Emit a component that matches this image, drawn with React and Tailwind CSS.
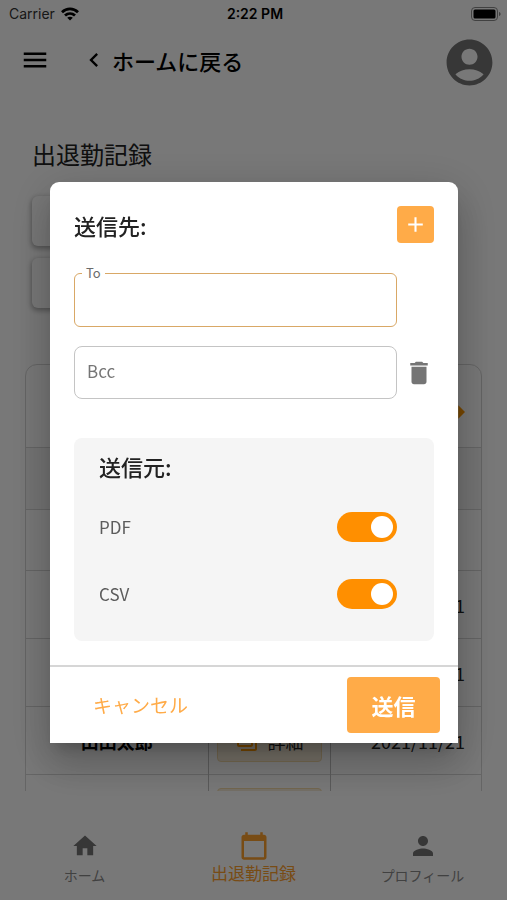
import { useState } from 'react';
import {
  MdAccountCircle,
  MdAdd,
  MdArrowRight,
  MdCalendarToday,
  MdChevronLeft,
  MdDelete,
  MdHome,
  MdMenu,
  MdOutlineLibraryBooks,
  MdPerson,
} from 'react-icons/md';

const ROWS = [1, 2, 3, 4];

const TABS = [
  { label: 'ホーム', icon: MdHome, size: 28 },
  { label: '出退勤記録', icon: MdCalendarToday, size: 30, active: true },
  { label: 'プロフィール', icon: MdPerson, size: 30 },
];

const WifiIcon = () => (
  <svg width="18" height="14" viewBox="0 0 18 14" fill="none" stroke="currentColor" strokeWidth="2.8">
    <path d="M1 5.2C5.6 0.8 12.4 0.8 17 5.2" />
    <path d="M4 8.6C6.9 5.9 11.1 5.9 14 8.6" />
    <path d="M9 13.6L6.2 10.8C7.8 9.4 10.2 9.4 11.8 10.8Z" fill="currentColor" stroke="none" />
  </svg>
);

const BatteryIcon = () => (
  <svg width="30" height="14" viewBox="0 0 30 14" fill="none">
    <rect x="0.5" y="0.5" width="26" height="13" rx="3.5" stroke="#8a8a8a" />
    <rect x="2.5" y="2.5" width="22" height="9" rx="1.5" fill="#000" />
    <path d="M28 5V9C29 8.7 29.6 8 29.6 7C29.6 6 29 5.3 28 5Z" fill="#8a8a8a" />
  </svg>
);

function StatusBar() {
  return (
    <div className="grid h-7 shrink-0 grid-cols-3 items-center pl-[9px] pr-1.5 font-['Inter',sans-serif] text-sm text-black">
      <div className="flex items-center gap-1.5">
        <span className="text-[#333]">Carrier</span>
        <WifiIcon />
      </div>
      <span className="text-center font-semibold">2:22 PM</span>
      <div className="flex justify-end">
        <BatteryIcon />
      </div>
    </div>
  );
}

function Header() {
  return (
    <header className="flex h-[68px] shrink-0 items-center justify-between pl-5 pr-2.5 text-black">
      <div className="flex items-center gap-[30px] pb-1">
        <button type="button" aria-label="menu">
          <MdMenu size={30} />
        </button>
        <a href="#home" className="flex items-center gap-1 text-[22px] font-medium leading-8">
          <MdChevronLeft size={28} />
          ホームに戻る
        </a>
      </div>
      <button type="button" aria-label="account" className="text-[#757575]">
        <MdAccountCircle size={55} />
      </button>
    </header>
  );
}

function RecordsTable() {
  return (
    <div className="mt-14 rounded-t-xl border border-[#d6d6d6]">
      <div className="flex h-[82px] items-center justify-end pr-1 pt-3">
        <button type="button" aria-label="next" className="text-[#ff9800]">
          <MdArrowRight size={32} />
        </button>
      </div>
      <table className="w-full table-fixed border-collapse text-lg leading-6">
        <thead>
          <tr className="h-[62px] border-t border-[#d6d6d6] bg-[#f5f5f5]">
            <td className="w-2/5" />
            <td className="w-[27%]" />
            <td />
          </tr>
          <tr className="h-[61px] border-t border-[#d6d6d6]">
            <td />
            <td />
            <td />
          </tr>
        </thead>
        <tbody>
          {ROWS.map((id) => (
            <tr key={id} className="h-[68px] border-t border-[#d6d6d6]">
              <td className="text-center font-bold text-black">山田太郎</td>
              <td className="border-x border-[#c0c0c0] px-2">
                <button
                  type="button"
                  className="flex h-[42px] w-full items-center justify-center gap-2 rounded border border-[#f3d9a8] bg-[#f7ecd8]"
                >
                  <MdOutlineLibraryBooks size={24} className="-scale-x-100 text-[#ff9800]" />
                  詳細
                </button>
              </td>
              <td className="pr-4 text-right">2021/11/21</td>
            </tr>
          ))}
        </tbody>
      </table>
    </div>
  );
}

function TabBar() {
  return (
    <nav className="grid h-[109px] shrink-0 grid-cols-3">
      {TABS.map(({ label, icon: Icon, size, active }) => (
        <a
          key={label}
          href="#tab"
          className={`flex flex-col items-center pt-10 ${active ? 'text-[#ffa12e]' : 'text-[#757575]'}`}
        >
          <span className="flex h-[30px] items-center">
            <Icon size={size} />
          </span>
          <span className={active ? 'text-[17px] leading-6' : 'text-sm leading-7 text-[#8a8a8a]'}>{label}</span>
        </a>
      ))}
    </nav>
  );
}

function ToggleRow({ id, label }) {
  const [on, setOn] = useState(true);

  return (
    <div className="flex items-center justify-between">
      <label htmlFor={id} className="text-[17px] leading-6 text-[#5c5c5c]">
        {label}
      </label>
      <input
        id={id}
        type="checkbox"
        role="switch"
        checked={on}
        onChange={(e) => setOn(e.target.checked)}
        className="flex h-[30px] w-[60px] appearance-none items-center justify-start rounded-full bg-gray-400 px-1 before:h-[22px] before:w-[22px] before:rounded-full before:bg-white checked:justify-end checked:bg-[#ff8f00]"
      />
    </div>
  );
}

function SendDialog() {
  return (
    <div
      role="dialog"
      aria-modal="true"
      className="w-full rounded-t-[9px] bg-white shadow-[0_11px_15px_-7px_rgba(0,0,0,0.2),0_24px_38px_3px_rgba(0,0,0,0.14),0_9px_46px_8px_rgba(0,0,0,0.12)]"
    >
      <div className="p-6">
        <div className="flex items-center justify-between">
          <h2 className="text-[22px] font-medium leading-8 text-[#222]">送信先:</h2>
          <button
            type="button"
            aria-label="add"
            className="flex h-[37px] w-[37px] items-center justify-center rounded bg-[#ffab48] text-white"
          >
            <MdAdd size={25} />
          </button>
        </div>

        <div className="relative mr-[37px] mt-[30px]">
          <label htmlFor="to" className="absolute -top-2.5 left-2 bg-white px-1 text-[13px] leading-5 text-[#6b6b6b]">
            To
          </label>
          <input
            id="to"
            type="text"
            className="block h-[54px] w-full rounded-md border border-[#d9a866] px-3 text-[17px] outline-none"
          />
        </div>

        <div className="mt-[19px] flex items-center">
          <input
            id="bcc"
            type="text"
            aria-label="Bcc"
            placeholder="Bcc"
            className="block h-[53px] min-w-0 flex-1 rounded-lg border border-[#c4c4c4] px-3 pb-1 text-[17px] placeholder:text-[#757575]"
          />
          <button type="button" aria-label="delete" className="flex w-[37px] justify-end text-[#757575]">
            <MdDelete size={30} />
          </button>
        </div>

        <section className="mt-[39px] flex flex-col rounded-lg bg-[#f5f5f5] pb-8 pl-[25px] pr-[37px] pt-3">
          <h2 className="mb-[30px] text-[22px] font-medium leading-8 text-[#222]">送信元:</h2>
          <div className="flex flex-col gap-[37px]">
            <ToggleRow id="pdf" label="PDF" />
            <ToggleRow id="csv" label="CSV" />
          </div>
        </section>
      </div>

      <div className="flex items-center justify-between border-t-2 border-[#d6d6d6] py-2.5 pl-[43px] pr-[18px]">
        <button type="button" className="text-[19px] text-[#ffab48]">
          キャンセル
        </button>
        <button type="button" className="h-14 w-[93px] rounded bg-[#ffab48] text-[22px] font-bold text-white">
          送信
        </button>
      </div>
    </div>
  );
}

export default function App() {
  return (
    <div className="flex h-screen flex-col overflow-hidden bg-white font-['Noto_Sans_CJK_JP',sans-serif] text-[#222]">
      <StatusBar />
      <Header />
      <main className="min-h-0 flex-1 overflow-hidden px-[25px] pt-[42px]">
        <h1 className="px-[7px] text-2xl leading-8">出退勤記録</h1>
        <div className="mt-[26px] flex flex-col gap-3 px-[7px]">
          <button type="button" aria-label="month" className="h-[50px] w-3/4 rounded-md bg-white shadow-[0_2px_5px_1px_rgba(0,0,0,0.3)]" />
          <button type="button" aria-label="export" className="h-[50px] w-3/4 rounded-md bg-white shadow-[0_2px_5px_1px_rgba(0,0,0,0.3)]" />
        </div>
        <RecordsTable />
      </main>
      <TabBar />

      <div className="fixed inset-0 flex items-center justify-center bg-black/53 pl-[50px] pr-[49px] pt-[25px]">
        <SendDialog />
      </div>
    </div>
  );
}
